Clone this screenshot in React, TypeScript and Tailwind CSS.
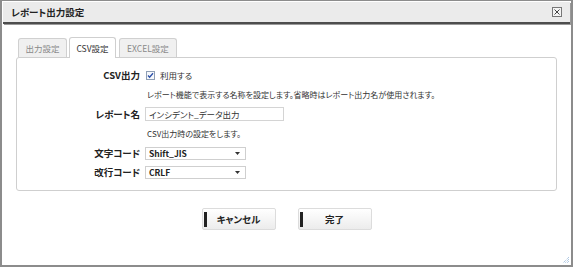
import React from "react";

const font = "font-['Noto_Sans_CJK_JP','Noto_Sans',sans-serif] [font-feature-settings:'palt']";

// フォームの1行。左にラベル、右に内容
function Row({ label, children, className = "" }: { label?: string; children: React.ReactNode; className?: string }) {
  return (
    <div className={`flex items-center ${className}`}>
      <div className="w-[129px] shrink-0 pr-[6px] text-right text-[9.5px] font-bold text-[#222]">{label}</div>
      <div className="flex items-center">{children}</div>
    </div>
  );
}

function Select({ value }: { value: string }) {
  return (
    <div className="flex h-[13px] w-[101px] items-center justify-between border border-[#cfcfcf] bg-white pl-[3px] pr-[5px]">
      <span className="text-[8.5px] font-semibold leading-none text-[#222]">{value}</span>
      <svg width="5" height="3" viewBox="0 0 5 3">
        <path d="M0 0h5L2.5 3z" fill="#333" />
      </svg>
    </div>
  );
}

function Button({ label }: { label: string }) {
  return (
    <button
      type="button"
      className="relative flex h-[22px] w-[74px] items-center justify-center rounded-[2px] border border-[#dcdcdc] bg-gradient-to-b from-white to-[#ececec] text-[9.5px] font-bold text-[#222]"
    >
      <span className="absolute left-[1px] top-[3px] h-[15px] w-[3px] bg-[#222]" />
      {label}
    </button>
  );
}

export default function App() {
  return (
    <div className={`flex h-[267px] w-[573px] flex-col border-b-2 border-l-2 border-r-2 border-t border-[#8c8c8c] bg-white ${font}`}>
      {/* タイトルバー */}
      <div className="mx-[1px] mt-[1px] flex h-[22px] items-center justify-between border-b-2 border-[#4d4d4d] bg-[#ebebeb] pl-[8px] pr-[8px] shadow-[1px_1px_0_#9a9a9a]">
        <span className="text-[9.5px] font-bold text-[#222]">レポート出力設定</span>
        <svg width="10" height="10" viewBox="0 0 10 10">
          <rect x="0.5" y="0.5" width="9" height="9" fill="#f4f4f4" stroke="#777" />
          <path d="M2.5 2.5l5 5M7.5 2.5l-5 5" stroke="#444" strokeWidth="1" />
        </svg>
      </div>

      <div className="flex flex-1 flex-col px-[14px] pt-[13px]">
        {/* タブ */}
        <div className="flex items-end gap-[2px] pl-[2px]">
          <div className="flex h-[19px] w-[49px] items-center justify-center rounded-t-[3px] border border-b-0 border-[#d0d0d0] bg-[#f0f0f0] text-[8.5px] text-[#888]">
            出力設定
          </div>
          <div className="relative -mb-[1px] flex h-[21px] w-[47px] items-center justify-center rounded-t-[3px] border border-b-0 border-[#cfcfcf] bg-white text-[8.5px] text-[#333]">
            CSV設定
          </div>
          <div className="ml-[1px] flex h-[19px] w-[58px] items-center justify-center rounded-t-[3px] border border-b-0 border-[#d0d0d0] bg-[#f0f0f0] text-[8.5px] text-[#888]">
            EXCEL設定
          </div>
        </div>

        {/* パネル */}
        <div className="flex h-[134px] w-[541px] flex-col rounded-[3px] border border-[#cfcfcf] bg-white pt-[10px] text-[8px] text-[#333]">
          <Row label="CSV出力" className="h-[14px]">
            <svg width="9" height="9" viewBox="0 0 9 9" className="mr-[5px]">
              <rect x="0.5" y="0.5" width="8" height="8" fill="#f6f8fb" stroke="#8f9fb5" />
              <path d="M2 4.5l1.6 1.7L7 2.3" fill="none" stroke="#2a4fa8" strokeWidth="1.3" />
            </svg>
            <span className="text-[8.5px]">利用する</span>
          </Row>
          <Row className="mt-[7px] h-[12px]">
            <span className="pl-[1px]">レポート機能で表示する名称を設定します。省略時はレポート出力名が使用されます。</span>
          </Row>
          <Row label="レポート名" className="mt-[5px] h-[16px]">
            <div className="-ml-[1px] flex h-[14px] w-[139px] items-center border border-[#d4d4d4] bg-white pl-[3px] text-[8.5px] text-[#333]">
              インシデント_データ出力
            </div>
          </Row>
          <Row className="mt-[6px] h-[12px]">
            <span className="pl-[1px]">CSV出力時の設定をします。</span>
          </Row>
          <Row label="文字コード" className="mt-[6px] h-[14px]">
            <div className="-ml-[1px]">
              <Select value="Shift_JIS" />
            </div>
          </Row>
          <Row label="改行コード" className="mt-[5px] h-[14px]">
            <div className="-ml-[1px]">
              <Select value="CRLF" />
            </div>
          </Row>
        </div>

        {/* ボタン */}
        <div className="mt-[17px] flex justify-center gap-[22px]">
          <Button label="キャンセル" />
          <Button label="完了" />
        </div>
      </div>

      {/* リサイズグリップ */}
      <div className="flex justify-end pb-[1px] pr-[1px]">
        <svg width="8" height="8" viewBox="0 0 8 8">
          <path d="M7 1L1 7M7 3L3 7M7 5L5 7" stroke="#8fb3d9" strokeWidth="1" strokeDasharray="1 1" />
        </svg>
      </div>
    </div>
  );
}
